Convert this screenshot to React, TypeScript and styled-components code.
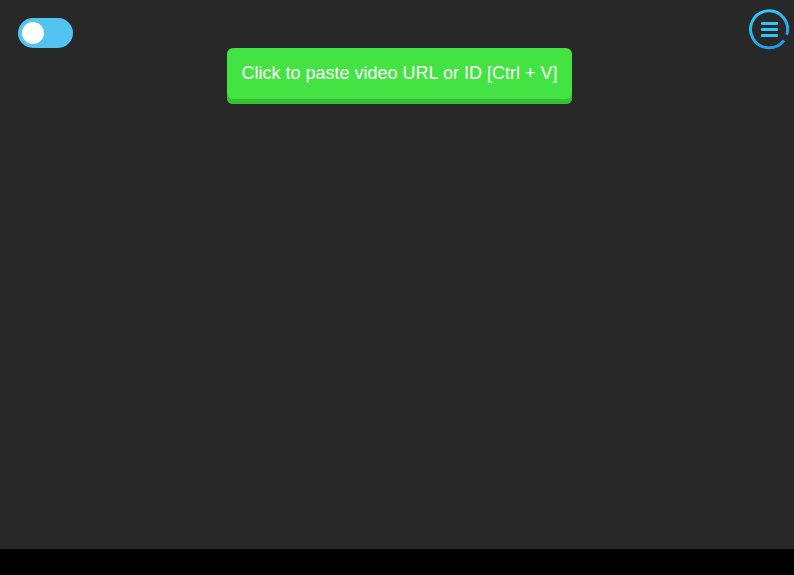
import React from "react";
import styled, { createGlobalStyle } from "styled-components";

const GlobalStyle = createGlobalStyle`
    html, body {
        margin: 0;
        padding: 0;
        background: #000;
    }
    body {
        font-family: "Liberation Sans", Arial, sans-serif;
    }
`;

const Page = styled.div`
    height: 549px;
    background: #282828;
    display: flex;
    flex-direction: column;
`;

const TopBar = styled.div`
    height: 48px;
    display: flex;
    justify-content: space-between;
    align-items: flex-start;
`;

const Toggle = styled.div<{ $on?: boolean }>`
    margin: 18px 0 0 18px;
    width: 55px;
    height: 30px;
    border-radius: 15px;
    background: #52c4f1;
    display: flex;
    align-items: center;
    justify-content: ${(p) => (p.$on ? "flex-end" : "flex-start")};
    padding: 0 4px;
    box-sizing: border-box;
    cursor: pointer;
`;

const Knob = styled.span`
    width: 22px;
    height: 22px;
    border-radius: 50%;
    background: #fff;
`;

const MenuButton = styled.button`
    margin: 9px 2px 0 0;
    width: 44px;
    height: 42px;
    padding: 0;
    border: none;
    background: transparent;
    cursor: pointer;
    display: flex;
`;

const Center = styled.div`
    display: flex;
    justify-content: center;
    padding-left: 5px;
`;

const PasteButton = styled.button`
    height: 56px;
    padding: 0 15px 5px;
    border: none;
    border-radius: 6px;
    background: #43e343;
    box-shadow: inset 0 -5px 0 #35c235;
    color: #fff;
    font-family: "Liberation Sans", Arial, sans-serif;
    font-size: 18px;
    cursor: pointer;
`;

const MenuIcon = () => (
    <svg width="44" height="42" viewBox="0 0 44 42">
        <defs>
            <linearGradient id="ring" x1="0" y1="0" x2="0.4" y2="1">
                <stop offset="0" stopColor="#34cff6" />
                <stop offset="1" stopColor="#1e9ff0" />
            </linearGradient>
        </defs>
        <path
            d="M 35.9 31.3 A 18.5 18.5 0 1 1 38.7 25.8"
            fill="none"
            stroke="url(#ring)"
            strokeWidth="3"
        />
        <g fill="#35c2f6">
            <rect x="13" y="13" width="17" height="3" rx="1" />
            <rect x="13" y="19" width="17" height="3" rx="1" />
            <rect x="13" y="25" width="17" height="3" rx="1" />
        </g>
    </svg>
);

export default function App() {
    return (
        <>
            <GlobalStyle />
            <Page>
                <TopBar>
                    <Toggle>
                        <Knob />
                    </Toggle>
                    <MenuButton aria-label="menu">
                        <MenuIcon />
                    </MenuButton>
                </TopBar>
                <Center>
                    <PasteButton>Click to paste video URL or ID [Ctrl + V]</PasteButton>
                </Center>
            </Page>
        </>
    );
}
